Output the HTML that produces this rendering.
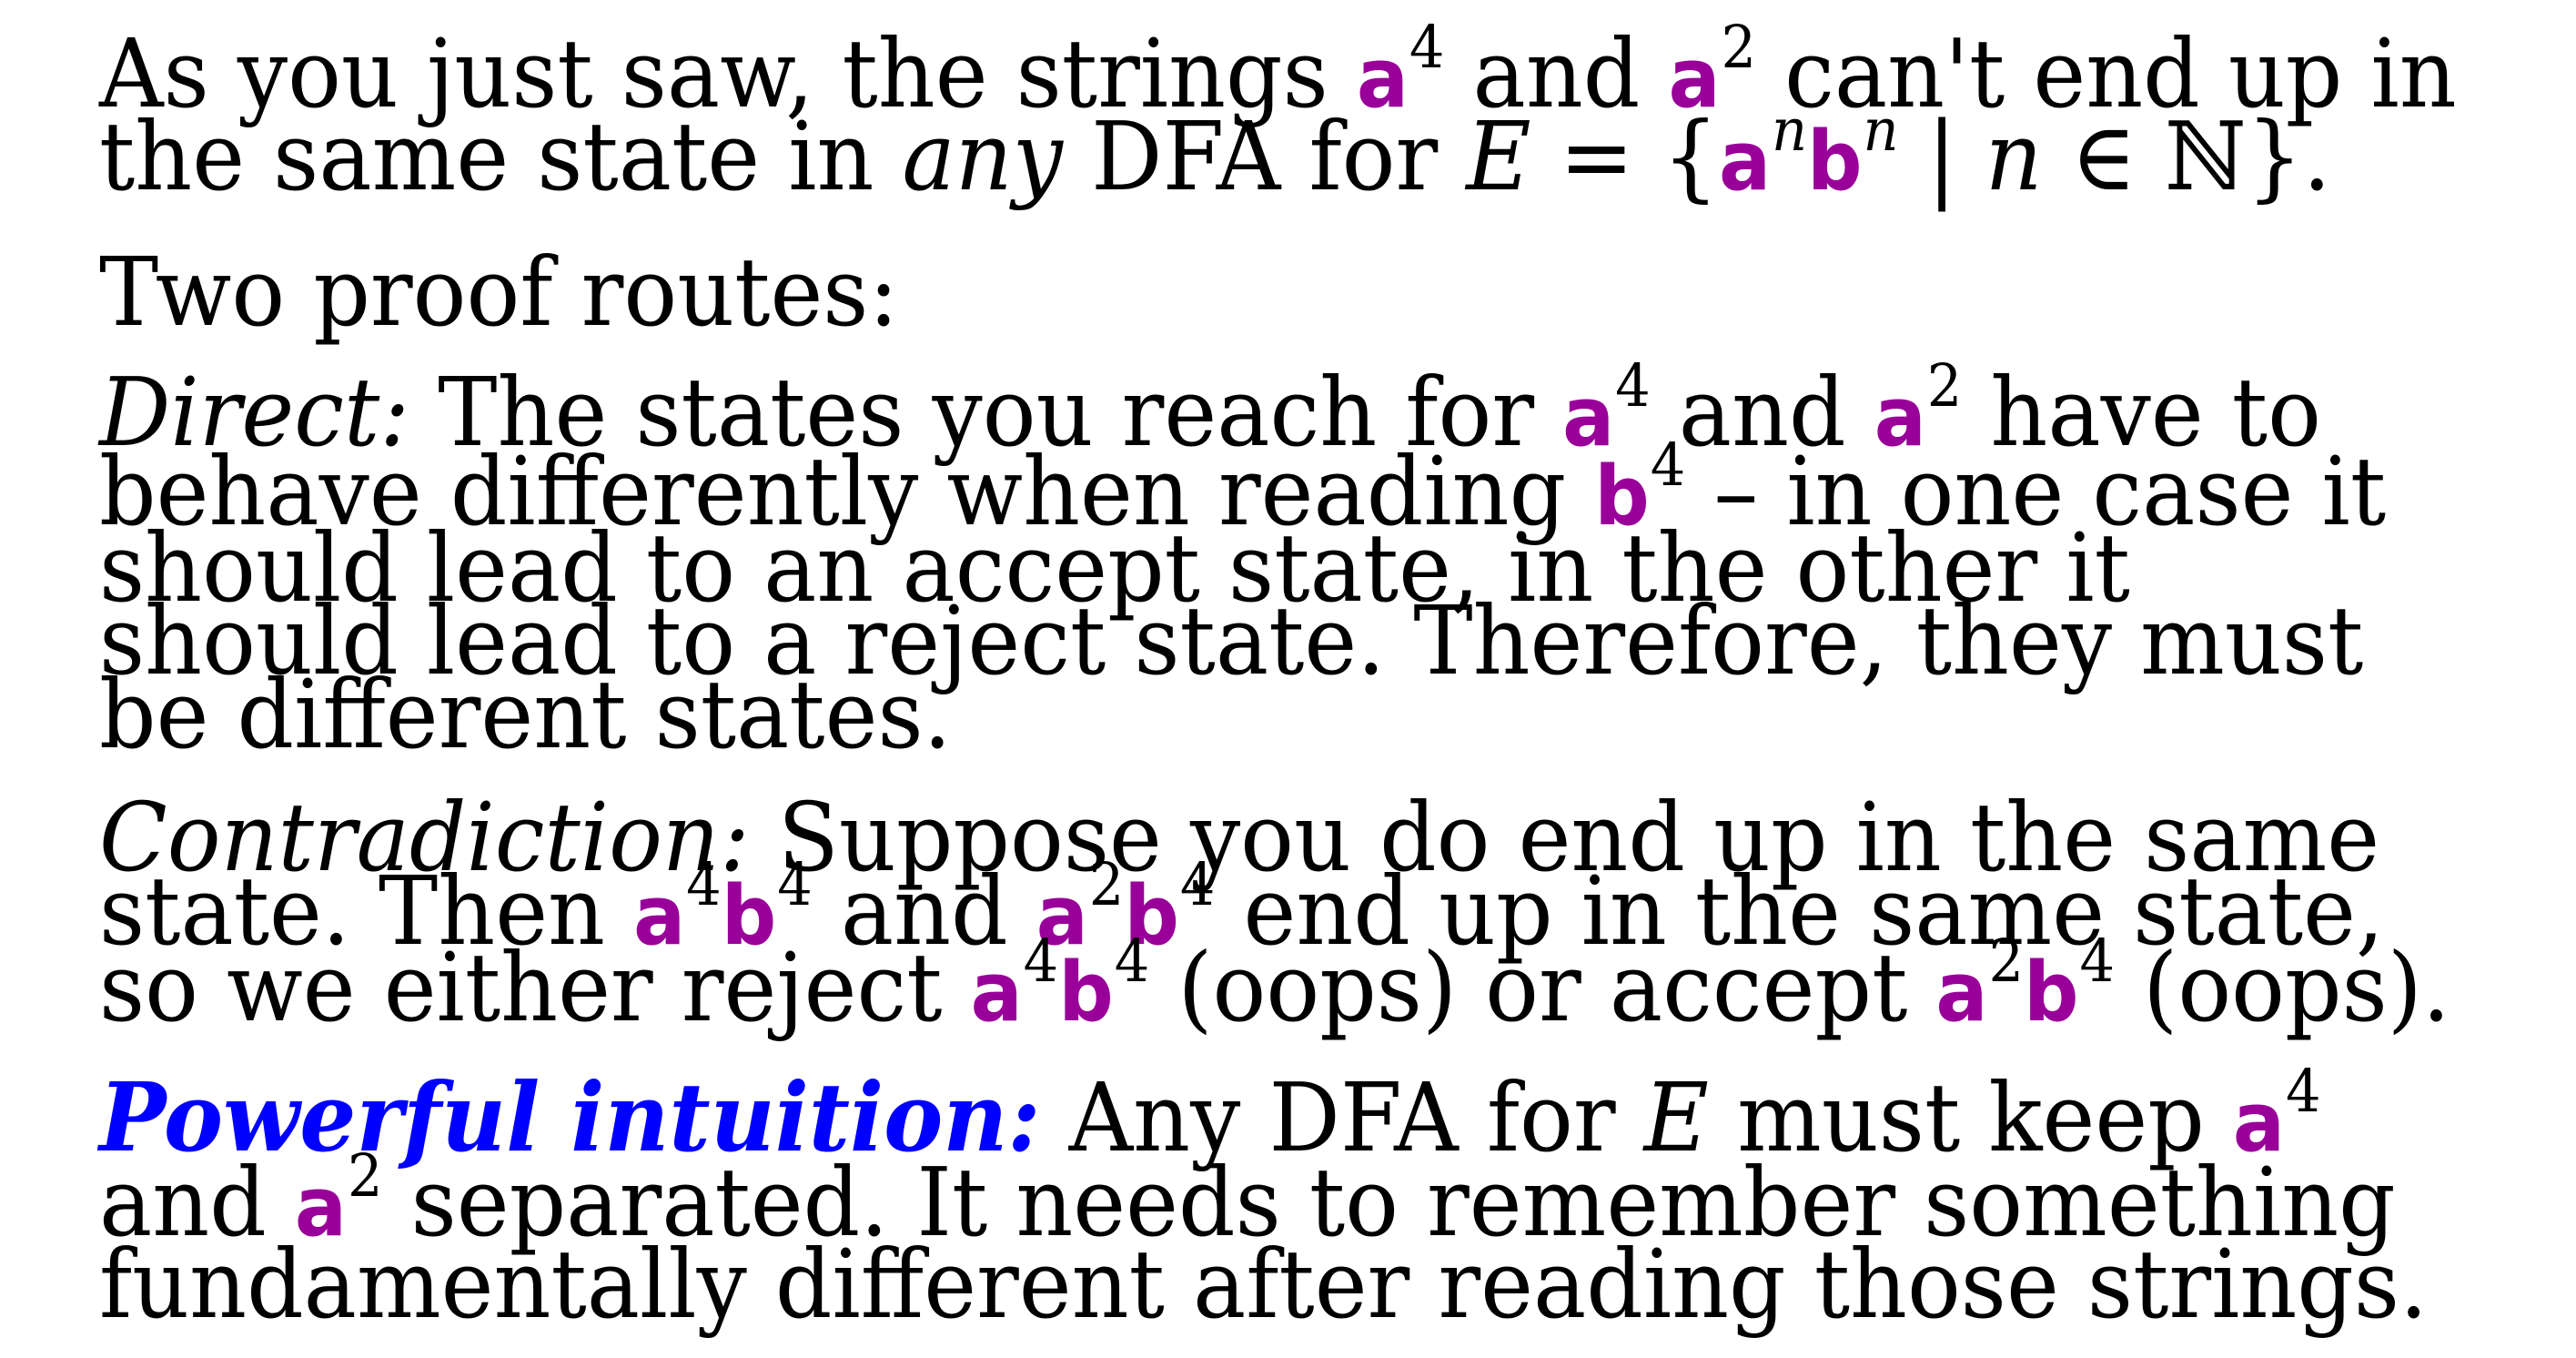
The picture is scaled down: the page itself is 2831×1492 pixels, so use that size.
<!DOCTYPE html>
<html><head><meta charset="utf-8"><style>
html,body{margin:0;padding:0;background:#fff;width:2831px;height:1492px;overflow:hidden;position:relative}
.l{position:absolute;left:109px;white-space:nowrap;font-family:"DejaVu Serif","Liberation Serif",serif;font-size:104px;line-height:104px;color:#000;transform:scaleX(0.94);transform-origin:0 0}
.s{font-family:"DejaVu Sans","Liberation Sans",sans-serif;font-weight:bold;color:#990099;font-size:90px}
sup{font-size:62%;vertical-align:0;position:relative;top:-0.66em;line-height:0;margin-left:1px}
.bl{color:#0000ff;font-weight:bold;font-style:italic}
i{font-style:italic}
</style></head><body>
<div class="l" style="top:29px">As you just saw, the strings <span class="s">a</span><sup>4</sup> and <span class="s">a</span><sup>2</sup> can't end up in</div>
<div class="l" style="top:120px">the same state in <i>any</i> DFA for <i>E</i> = {<span class="s">a</span><sup><i>n</i></sup><span class="s">b</span><sup><i>n</i></sup> | <i>n</i> ∈ ℕ}.</div>
<div class="l" style="top:269px">Two proof routes:</div>
<div class="l" style="top:401px"><i>Direct:</i> The states you reach for <span class="s">a</span><sup>4</sup> and <span class="s">a</span><sup>2</sup> have to</div>
<div class="l" style="top:488px">behave differently when reading <span class="s">b</span><sup>4</sup> – in one case it</div>
<div class="l" style="top:572px">should lead to an accept state, in the other it</div>
<div class="l" style="top:652px">should lead to a reject state. Therefore, they must</div>
<div class="l" style="top:733px">be different states.</div>
<div class="l" style="top:868px"><i>Contradiction:</i> Suppose you do end up in the same</div>
<div class="l" style="top:949px">state. Then <span class="s">a</span><sup>4</sup><span class="s">b</span><sup>4</sup> and <span class="s">a</span><sup>2</sup><span class="s">b</span><sup>4</sup> end up in the same state,</div>
<div class="l" style="top:1033px">so we either reject <span class="s">a</span><sup>4</sup><span class="s">b</span><sup>4</sup> (oops) or accept <span class="s">a</span><sup>2</sup><span class="s">b</span><sup>4</sup> (oops).</div>
<div class="l" style="top:1176px"><span class="bl">Powerful intuition:</span> Any DFA for <i>E</i> must keep <span class="s">a</span><sup>4</sup></div>
<div class="l" style="top:1269px">and <span class="s">a</span><sup>2</sup> separated. It needs to remember something</div>
<div class="l" style="top:1359px">fundamentally different after reading those strings.</div>
</body></html>
